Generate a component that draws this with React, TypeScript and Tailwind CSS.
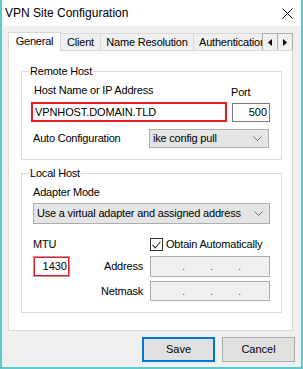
import React from "react";

const FONT = { fontFamily: '"Liberation Sans", Arial, sans-serif' };

function Chevron() {
  return (
    <svg width="9" height="5" viewBox="0 0 9 5" className="shrink-0">
      <path d="M0.5 0.5 L4.5 4.5 L8.5 0.5" fill="none" stroke="#6d6d6d" strokeWidth="1" />
    </svg>
  );
}

function Select({ text, className }: { text: string; className: string }) {
  return (
    <div
      className={`flex items-center justify-between border border-[#adadad] bg-[#e5e5e5] pl-[3px] pr-[6px] ${className}`}
    >
      <span className="tracking-[-0.2px] whitespace-nowrap">{text}</span>
      <Chevron />
    </div>
  );
}

function IpField({ className }: { className: string }) {
  return (
    <div className={`flex items-center border border-[#acacac] bg-[#f0f0f0] ${className}`}>
      <span className="w-[31px]" />
      <span className="w-[28px] text-[#555] leading-none">.</span>
      <span className="w-[28px] text-[#555] leading-none">.</span>
      <span className="text-[#555] leading-none">.</span>
    </div>
  );
}

function GroupBox({
  title,
  className,
  children,
}: {
  title: string;
  className: string;
  children: React.ReactNode;
}) {
  return (
    <div className={`relative border border-[#dcdcdc] ${className}`}>
      <span className="absolute -top-[7px] left-[7px] bg-white px-[1px] leading-[13px] tracking-[-0.2px]">
        {title}
      </span>
      {children}
    </div>
  );
}

export default function App() {
  return (
    <div
      style={FONT}
      className="flex h-[369px] w-[303px] flex-col border-x-2 border-b-2 border-[#5fc9d0] text-[11px] text-black"
    >
      {/* title bar */}
      <div className="flex h-[26px] items-center justify-between bg-white pl-[3px] pr-[8px]">
        <span className="text-[12px] leading-none">VPN Site Configuration</span>
        <svg width="11" height="11" viewBox="0 0 11 11">
          <path d="M0.5 0.5 L10.5 10.5 M10.5 0.5 L0.5 10.5" stroke="#000" strokeWidth="1" />
        </svg>
      </div>

      <div className="flex flex-1 flex-col bg-[#f0f0f0]">
        {/* tabs */}
        <div className="ml-[6px] mt-[6px] flex h-[18px] items-end">
          <div className="relative z-10 -mb-px flex h-[19px] w-[53px] items-center justify-center border border-b-0 border-[#d9d9d9] bg-white pb-[1px] tracking-[-0.2px]">
            General
          </div>
          <div className="flex h-[17px] w-[40px] items-center justify-center border-r border-t border-[#d9d9d9] tracking-[-0.2px]">
            Client
          </div>
          <div className="flex h-[17px] w-[93px] items-center justify-center border-r border-t border-[#d9d9d9] tracking-[-0.2px]">
            Name Resolution
          </div>
          <div className="flex h-[17px] w-[68px] items-center overflow-hidden border-t border-[#d9d9d9] pl-[5px] tracking-[-0.2px] whitespace-nowrap">
            Authentication
          </div>
          <div className="flex h-[17px] w-[16px] items-center justify-center border border-b-0 border-[#adadad] bg-[#f0f0f0]">
            <svg width="4" height="7" viewBox="0 0 4 7">
              <path d="M4 0 L0 3.5 L4 7 Z" fill="#000" />
            </svg>
          </div>
          <div className="flex h-[17px] w-[15px] items-center justify-center border border-b-0 border-l-0 border-[#adadad] bg-[#f0f0f0]">
            <svg width="4" height="7" viewBox="0 0 4 7">
              <path d="M0 0 L4 3.5 L0 7 Z" fill="#000" />
            </svg>
          </div>
        </div>

        {/* tab panel */}
        <div className="ml-[6px] h-[281px] w-[285px] border border-[#d9d9d9] bg-white pl-[12px]">
          <GroupBox title="Remote Host" className="mt-[20px] h-[89px] w-[261px] pl-[9px]">
            <div className="flex">
              <div className="mt-[12px] flex flex-col">
                <span className="ml-[3px] h-[13px] leading-[13px] tracking-[-0.2px]">
                  Host Name or IP Address
                </span>
                <div className="mt-[5px] flex h-[20px] w-[196px] items-center border-2 border-[#ed1c24] pl-[2px] tracking-[-0.1px]">
                  VPNHOST.DOMAIN.TLD
                </div>
              </div>
              <div className="ml-[5px] mt-[14px] flex flex-col">
                <span className="-ml-[1px] h-[13px] leading-[13px] tracking-[-0.2px]">Port</span>
                <div className="mt-[4px] flex h-[19px] w-[38px] items-center justify-end border border-[#7a7a7a] pr-[2px]">
                  500
                </div>
              </div>
            </div>
            <div className="mt-[7px] flex items-center">
              <span className="w-[118px] pl-[2px] tracking-[-0.2px]">Auto Configuration</span>
              <Select text="ike config pull" className="h-[19px] w-[120px]" />
            </div>
          </GroupBox>

          <GroupBox title="Local Host" className="mt-[13px] h-[140px] w-[261px] pl-[11px]">
            <div className="mt-[12px] h-[13px] leading-[13px] tracking-[-0.2px]">Adapter Mode</div>
            <Select
              text="Use a virtual adapter and assigned address"
              className="mt-[4px] h-[21px] w-[237px]"
            />
            <div className="mt-[14px] flex h-[13px] items-center">
              <span className="w-[117px] tracking-[-0.2px]">MTU</span>
              <div className="flex h-[13px] w-[13px] items-center justify-center border border-[#333] bg-white">
                <svg width="9" height="8" viewBox="0 0 9 8">
                  <path d="M0.5 4 L3.3 7 L8.5 0.5" fill="none" stroke="#333" strokeWidth="1.1" />
                </svg>
              </div>
              <span className="ml-[3px] tracking-[-0.2px]">Obtain Automatically</span>
            </div>
            <div className="mt-[5px] flex items-center">
              <div className="h-[21px] w-[37px] border border-[#a0a0a0]">
                <div className="flex h-full items-center justify-end border border-[#ed1c24] pr-[1px]">
                  1430
                </div>
              </div>
              <span className="w-[73px] text-right tracking-[-0.2px]">Address</span>
              <IpField className="ml-[7px] h-[21px] w-[120px]" />
            </div>
            <div className="mt-[4px] flex items-center">
              <span className="w-[110px] text-right tracking-[-0.2px]">Netmask</span>
              <IpField className="ml-[7px] h-[20px] w-[120px]" />
            </div>
          </GroupBox>
        </div>

        {/* buttons */}
        <div className="mt-[6px] flex justify-end gap-[7px] pr-[6px]">
          <button className="flex h-[25px] w-[73px] items-center justify-center border-2 border-[#0078d7] bg-[#e1e1e1]">
            Save
          </button>
          <button className="flex h-[25px] w-[73px] items-center justify-center border border-[#adadad] bg-[#e1e1e1]">
            Cancel
          </button>
        </div>
      </div>
    </div>
  );
}
